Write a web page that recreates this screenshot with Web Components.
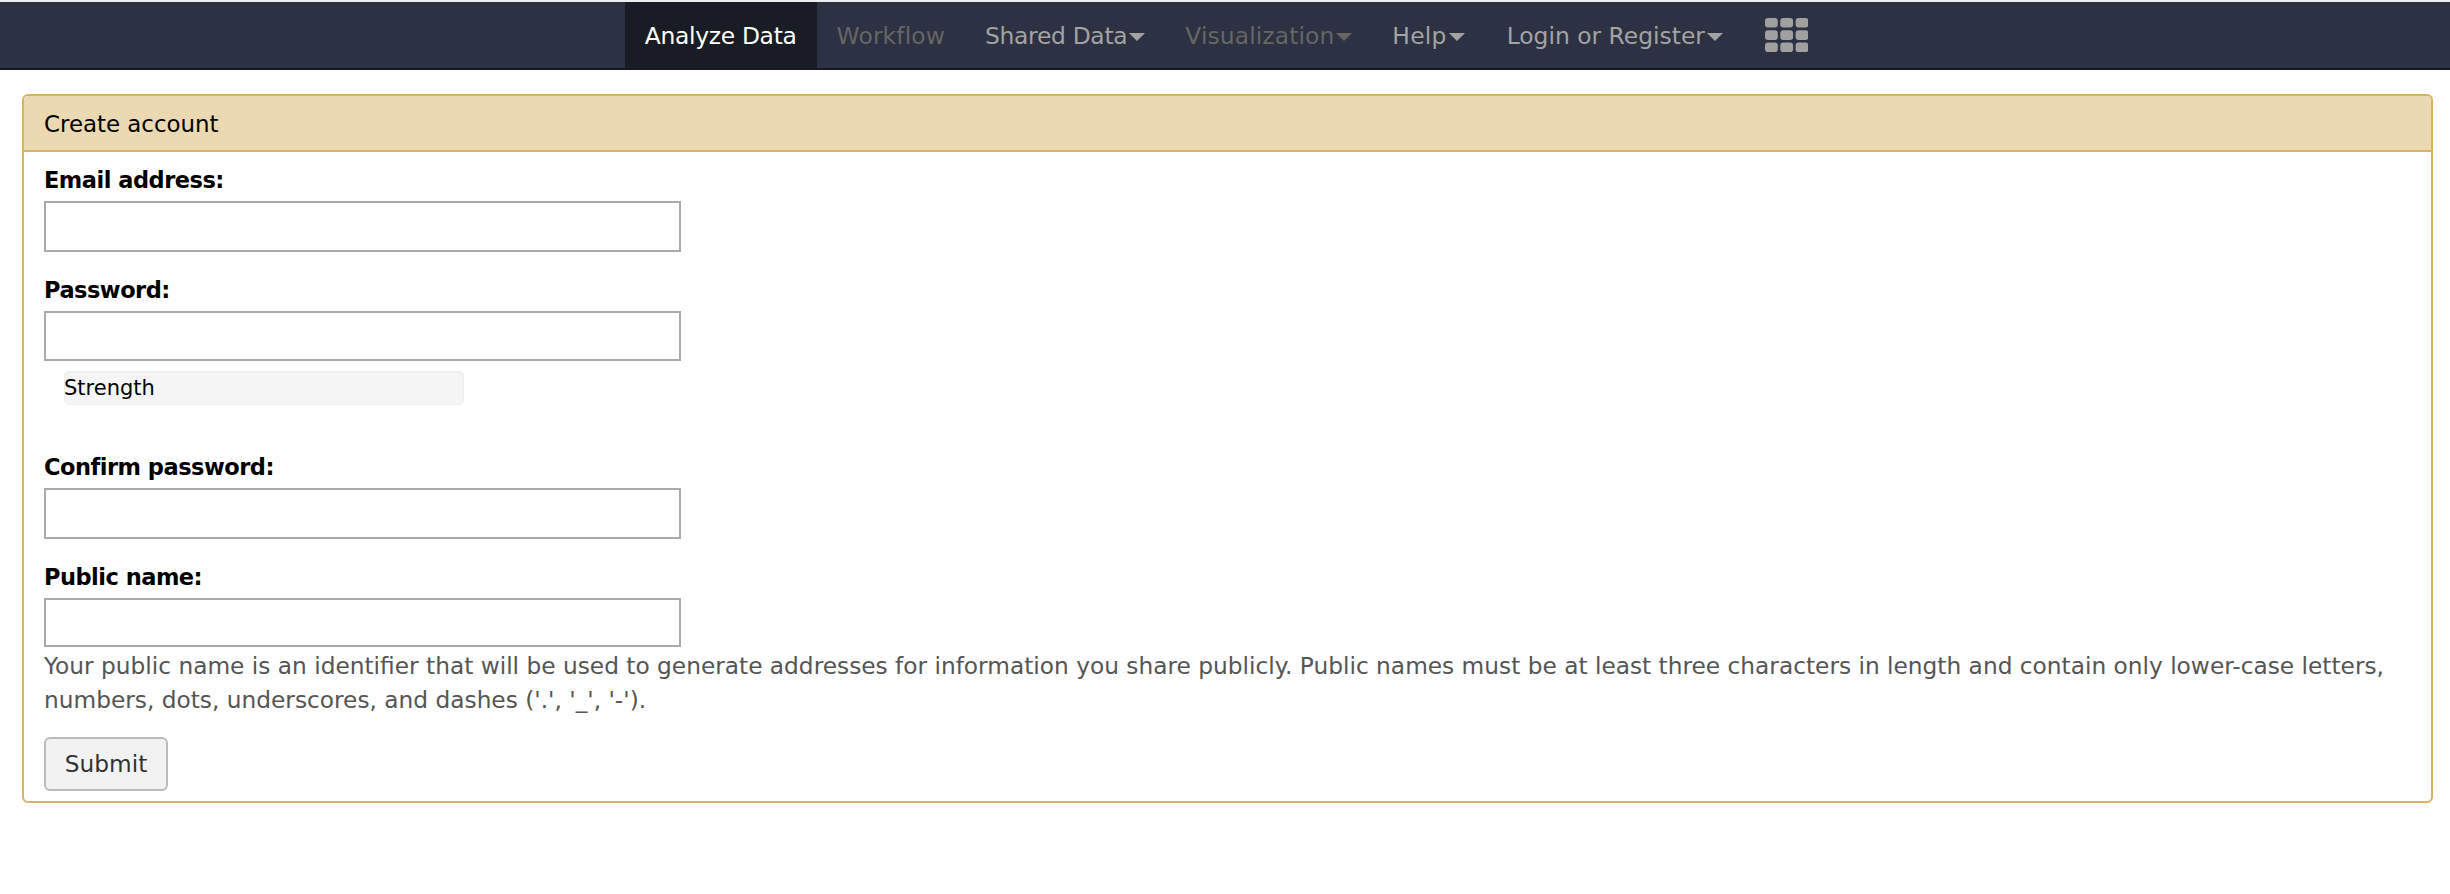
<!DOCTYPE html>
<html>
<head>
<meta charset="utf-8">
<title>Create account</title>
<style>
  html, body { margin: 0; padding: 0; background: #fff; }
  body { font-family: "DejaVu Sans", "Liberation Sans", sans-serif; font-size: 23.28px; line-height: 34px; color: #000; }
</style>
</head>
<body>
<app-masthead>
  <nav-item active style="--track:-.3px">Analyze Data</nav-item>
  <nav-item disabled style="--track:.125px">Workflow</nav-item>
  <nav-item caret style="--track:-.3px">Shared Data</nav-item>
  <nav-item disabled caret style="--track:.1px">Visualization</nav-item>
  <nav-item caret style="--track:.25px;margin-right:2px">Help</nav-item>
  <nav-item caret>Login or Register</nav-item>
  <grid-icon></grid-icon>
</app-masthead>
<main-area>
  <form-panel heading="Create account">
    <form-field label="Email address:" type="text" style="--input-height:51px"></form-field>
    <form-field label="Password:" type="password">
      <strength-meter>Strength</strength-meter>
    </form-field>
    <form-field label="Confirm password:" type="password" style="--input-height:51px"></form-field>
    <form-field label="Public name:" type="text" flush style="--input-height:49px">
      <span>Your public name is an identifier that will be used to generate addresses for information you share publicly. Public names must be at least three characters in length and contain only lower-case letters, numbers, dots, underscores, and dashes ('.', '_', '-').</span>
    </form-field>
    <submit-button>Submit</submit-button>
  </form-panel>
</main-area>

<script>
class AppMasthead extends HTMLElement {
  constructor() {
    super();
    this.attachShadow({ mode: 'open' });
    this.shadowRoot.innerHTML = `
      <style>
        :host {
          display: flex;
          justify-content: center;
          height: 66px;
          background: #2c3143;
          border-top: 2px solid #eee;
          border-bottom: 2px solid #16171f;
        }
        nav { display: flex; align-items: stretch; margin-left: 4px; }
      </style>
      <nav><slot></slot></nav>
    `;
  }
}

class NavItem extends HTMLElement {
  constructor() {
    super();
    this.attachShadow({ mode: 'open' });
    this.shadowRoot.innerHTML = `
      <style>
        :host {
          display: flex;
          align-items: center;
          padding: 2px 20px 0;
          font-size: 23.4px;
          letter-spacing: var(--track, 0);
          color: #a3a3a3;
          white-space: nowrap;
        }
        :host([active]) { background: #191b25; color: #fff; }
        :host([disabled]) { color: #666; }
        .caret {
          display: none;
          width: 0;
          height: 0;
          margin: 2px 0 0 2px;
          border-left: 8px solid transparent;
          border-right: 8px solid transparent;
          border-top: 8px solid currentColor;
        }
        :host([caret]) .caret { display: block; }
      </style>
      <slot></slot><span class="caret"></span>
    `;
  }
}

class GridIcon extends HTMLElement {
  constructor() {
    super();
    this.attachShadow({ mode: 'open' });
    let cells = '';
    for (let row = 0; row < 3; row++) {
      for (let col = 0; col < 3; col++) {
        cells += `<rect x="${col * 15.3}" y="${row * 12.3}" width="12.8" height="9.6" rx="3"/>`;
      }
    }
    this.shadowRoot.innerHTML = `
      <style>
        :host { display: flex; align-items: center; padding: 0 21px 0 22px; }
        svg { display: block; fill: #a0a0a0; }
      </style>
      <svg width="43.4" height="34.2" viewBox="0 0 43.4 34.2">${cells}</svg>
    `;
  }
}

class MainArea extends HTMLElement {
  constructor() {
    super();
    this.attachShadow({ mode: 'open' });
    this.shadowRoot.innerHTML = `
      <style>
        :host { display: block; padding: 24px 17px 0 22px; }
      </style>
      <slot></slot>
    `;
  }
}

class FormPanel extends HTMLElement {
  constructor() {
    super();
    this.attachShadow({ mode: 'open' });
    this.shadowRoot.innerHTML = `
      <style>
        :host {
          display: block;
          border: 2px solid #d8b365;
          border-radius: 6px;
          background: #fff;
        }
        header {
          height: 54px;
          line-height: 56px;
          padding: 0 20px;
          font-size: 22.9px;
          background: #ebd9b2;
          border-bottom: 2px solid #d8b365;
          border-radius: 4px 4px 0 0;
        }
        .body { padding: 10px 20px 10px; }
      </style>
      <header></header>
      <div class="body"><slot></slot></div>
    `;
    this.shadowRoot.querySelector('header').textContent = this.getAttribute('heading');
  }
}

class FormField extends HTMLElement {
  constructor() {
    super();
    this.attachShadow({ mode: 'open' });
    this.shadowRoot.innerHTML = `
      <style>
        :host { display: block; margin-bottom: 20px; }
        label {
          display: block;
          padding-top: 1px;
          margin-bottom: 4px;
          font-size: 22.5px;
          letter-spacing: -.5px;
          font-weight: bold;
        }
        input {
          display: block;
          box-sizing: border-box;
          width: 637px;
          height: var(--input-height, 50px);
          padding: 0 10px;
          margin: 0;
          background: #fff;
          border: 2px solid #aaa;
          border-radius: 0;
          outline: none;
        }
        .help { color: #555; }
        :host([flush]) .help { padding-top: 2px; }
      </style>
      <label></label>
      <input>
      <div class="help"><slot></slot></div>
    `;
    this.shadowRoot.querySelector('label').textContent = this.getAttribute('label');
    this.shadowRoot.querySelector('input').type = this.getAttribute('type') || 'text';
  }
}

class StrengthMeter extends HTMLElement {
  constructor() {
    super();
    this.attachShadow({ mode: 'open' });
    this.shadowRoot.innerHTML = `
      <style>
        :host {
          display: block;
          box-sizing: border-box;
          width: 400px;
          height: 34px;
          margin: 10px 0 44px 20px;
          background: #f5f5f5;
          border-radius: 6px;
          box-shadow: inset 0 0 0 1px #eee, inset 0 1px 2px rgba(0, 0, 0, 0.08);
          color: #000;
          font-size: 21px;
        }
      </style>
      <slot></slot>
    `;
  }
}

class SubmitButton extends HTMLElement {
  constructor() {
    super();
    this.attachShadow({ mode: 'open' });
    this.shadowRoot.innerHTML = `
      <style>
        :host { display: block; }
        button {
          display: block;
          box-sizing: border-box;
          width: 124px;
          height: 54px;
          padding: 0;
          font: inherit;
          color: #333;
          background: #f2f2f2;
          border: 2px solid #bbb;
          border-radius: 6px;
        }
      </style>
      <button type="button"><slot></slot></button>
    `;
  }
}

customElements.define('app-masthead', AppMasthead);
customElements.define('nav-item', NavItem);
customElements.define('grid-icon', GridIcon);
customElements.define('main-area', MainArea);
customElements.define('form-panel', FormPanel);
customElements.define('form-field', FormField);
customElements.define('strength-meter', StrengthMeter);
customElements.define('submit-button', SubmitButton);
</script>
</body>
</html>
